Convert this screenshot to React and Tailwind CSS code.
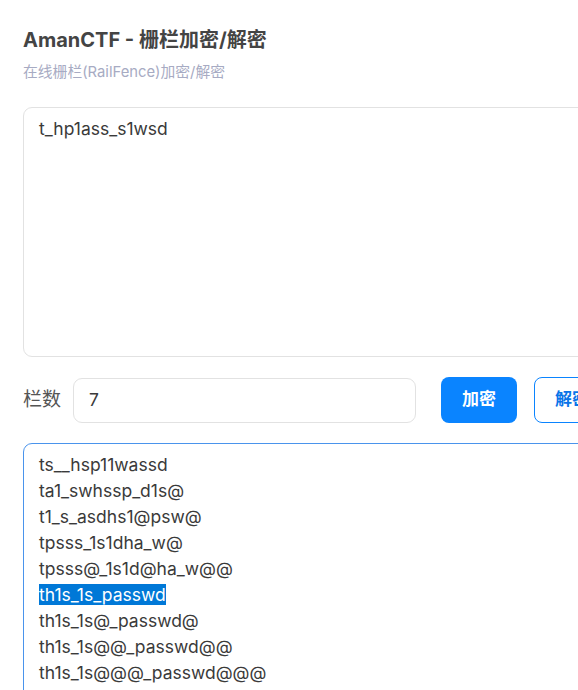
import { useState } from "react";

const lines = [
  "ts__hsp11wassd",
  "ta1_swhssp_d1s@",
  "t1_s_asdhs1@psw@",
  "tpsss_1s1dha_w@",
  "tpsss@_1s1d@ha_w@@",
  "th1s_1s_passwd",
  "th1s_1s@_passwd@",
  "th1s_1s@@_passwd@@",
  "th1s_1s@@@_passwd@@@",
];

function App() {
  const [rails] = useState("7");

  return (
    <div
      className="w-[578px] h-[690px] overflow-hidden bg-white"
      style={{ fontFamily: "Inter, 'Noto Sans CJK SC', sans-serif" }}
    >
      <div className="w-[680px] pl-[23px] pt-[27px]">
        <h1 className="text-[20px] leading-[26px] font-bold text-[#444]">
          AmanCTF - 栅栏加密/解密
        </h1>
        <p className="mt-[9px] text-[14.8px] leading-[20px] text-[#a7abc3]">
          在线栅栏(RailFence)加密/解密
        </p>

        <div className="mt-[25px] h-[250px] border border-[#e2e2e2] rounded-[9px] pl-[15px] pt-[8px] text-[17.5px] leading-[26px] text-[#3a3a3a]">
          t_hp1ass_s1wsd
        </div>

        <div className="mt-[20px] flex items-center">
          <span className="text-[19px] text-[#555] w-[50px]">栏数</span>
          <div className="w-[343px] h-[45px] border border-[#e2e2e2] rounded-[9px] pl-[15px] flex items-center text-[17.5px] text-[#3a3a3a]">
            {rails}
          </div>
          <button className="ml-[25px] w-[76px] h-[46px] rounded-[8px] bg-[#0a84ff] text-white text-[17px] font-bold">
            加密
          </button>
          <button className="ml-[17px] w-[76px] h-[46px] rounded-[8px] border border-[#0a84ff] bg-white text-[#0a74e8] text-[17px] font-bold">
            解密
          </button>
        </div>

        <div className="mt-[20px] h-[300px] border border-[#4a94ec] rounded-[9px] pl-[15px] pt-[8px] text-[17.5px] leading-[26px] text-[#3a3a3a]">
          {lines.map((l, i) => (
            <div key={i}>
              {i === 5 ? (
                <span className="bg-[#0078d7] text-white">{l}</span>
              ) : (
                l
              )}
            </div>
          ))}
        </div>
      </div>
    </div>
  );
}

export default App;
